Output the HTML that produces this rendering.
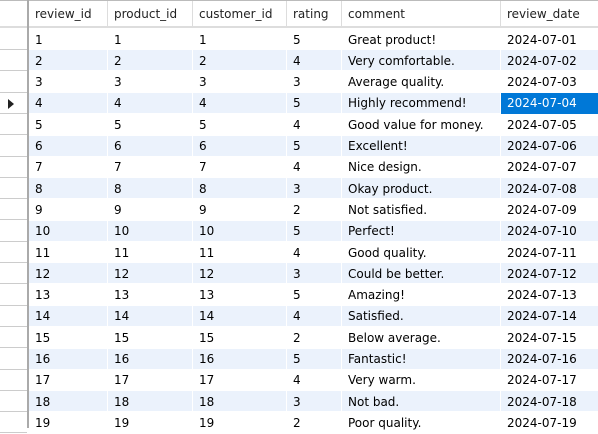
<!DOCTYPE html><html><head><style>
body{margin:0;width:598px;height:428px;overflow:hidden;background:#fff;font-family:Tahoma,"DejaVu Sans","Liberation Sans",sans-serif;font-size:12px;color:#000;position:relative}
.h{position:absolute;top:0;height:28px;border-top:1px solid #bbb;border-bottom:2px solid #ddd;box-sizing:border-box}
.c{position:absolute;line-height:21px;white-space:nowrap}
</style></head><body>
<div id="g"></div>
<script>
var cols=[28,107,192,286,341,500,598];
var names=["review_id","product_id","customer_id","rating","comment","review_date"];
var com=["Great product!","Very comfortable.","Average quality.","Highly recommend!","Good value for money.","Excellent!","Nice design.","Okay product.","Not satisfied.","Perfect!","Good quality.","Could be better.","Amazing!","Satisfied.","Below average.","Fantastic!","Very warm.","Not bad.","Poor quality."];
var rat=[5,4,3,5,4,5,4,3,2,5,4,3,5,4,2,5,4,3,2];
var h='<div class="h" style="left:0;width:598px"></div>';
for(var j=0;j<6;j++){h+='<div class="c" style="left:'+(cols[j]+7)+'px;top:4px;color:#222">'+names[j]+'</div>';
h+='<div style="position:absolute;left:'+cols[j]+'px;top:1px;width:1px;height:27px;background:#ddd"></div>';}
h+='<div style="position:absolute;left:27px;top:0;width:2px;height:428px;background:#aaa"></div>';
for(var i=0;i<19;i++){var t=29+i*21.3;var d=(i+1<10?'0':'')+(i+1);
h+='<div style="position:absolute;left:0;top:'+(t+20)+'px;width:27px;height:1px;background:#ccc"></div>';
if(i%2==1){for(var j=0;j<6;j++)h+='<div style="position:absolute;left:'+(cols[j]+1)+'px;top:'+t+'px;width:'+(cols[j+1]-cols[j]-1)+'px;height:20px;background:#ebf2fc"></div>';}
var v=[i+1,i+1,i+1,rat[i],com[i],'2024-07-'+d];
if(i==3){h+='<div style="position:absolute;left:501px;top:'+t+'px;width:97px;height:21px;background:#0078d7"></div>';
h+='<div style="position:absolute;left:8px;top:'+(t+6)+'px;width:0;height:0;border-top:5px solid transparent;border-bottom:5px solid transparent;border-left:6px solid #222"></div>';}
for(var j=0;j<6;j++)h+='<div class="c" style="left:'+(cols[j]+7)+'px;top:'+(t+0.5)+'px;'+(i==3&&j==5?'color:#fff':'')+'">'+v[j]+'</div>';}
document.getElementById('g').innerHTML=h;
</script></body></html>
